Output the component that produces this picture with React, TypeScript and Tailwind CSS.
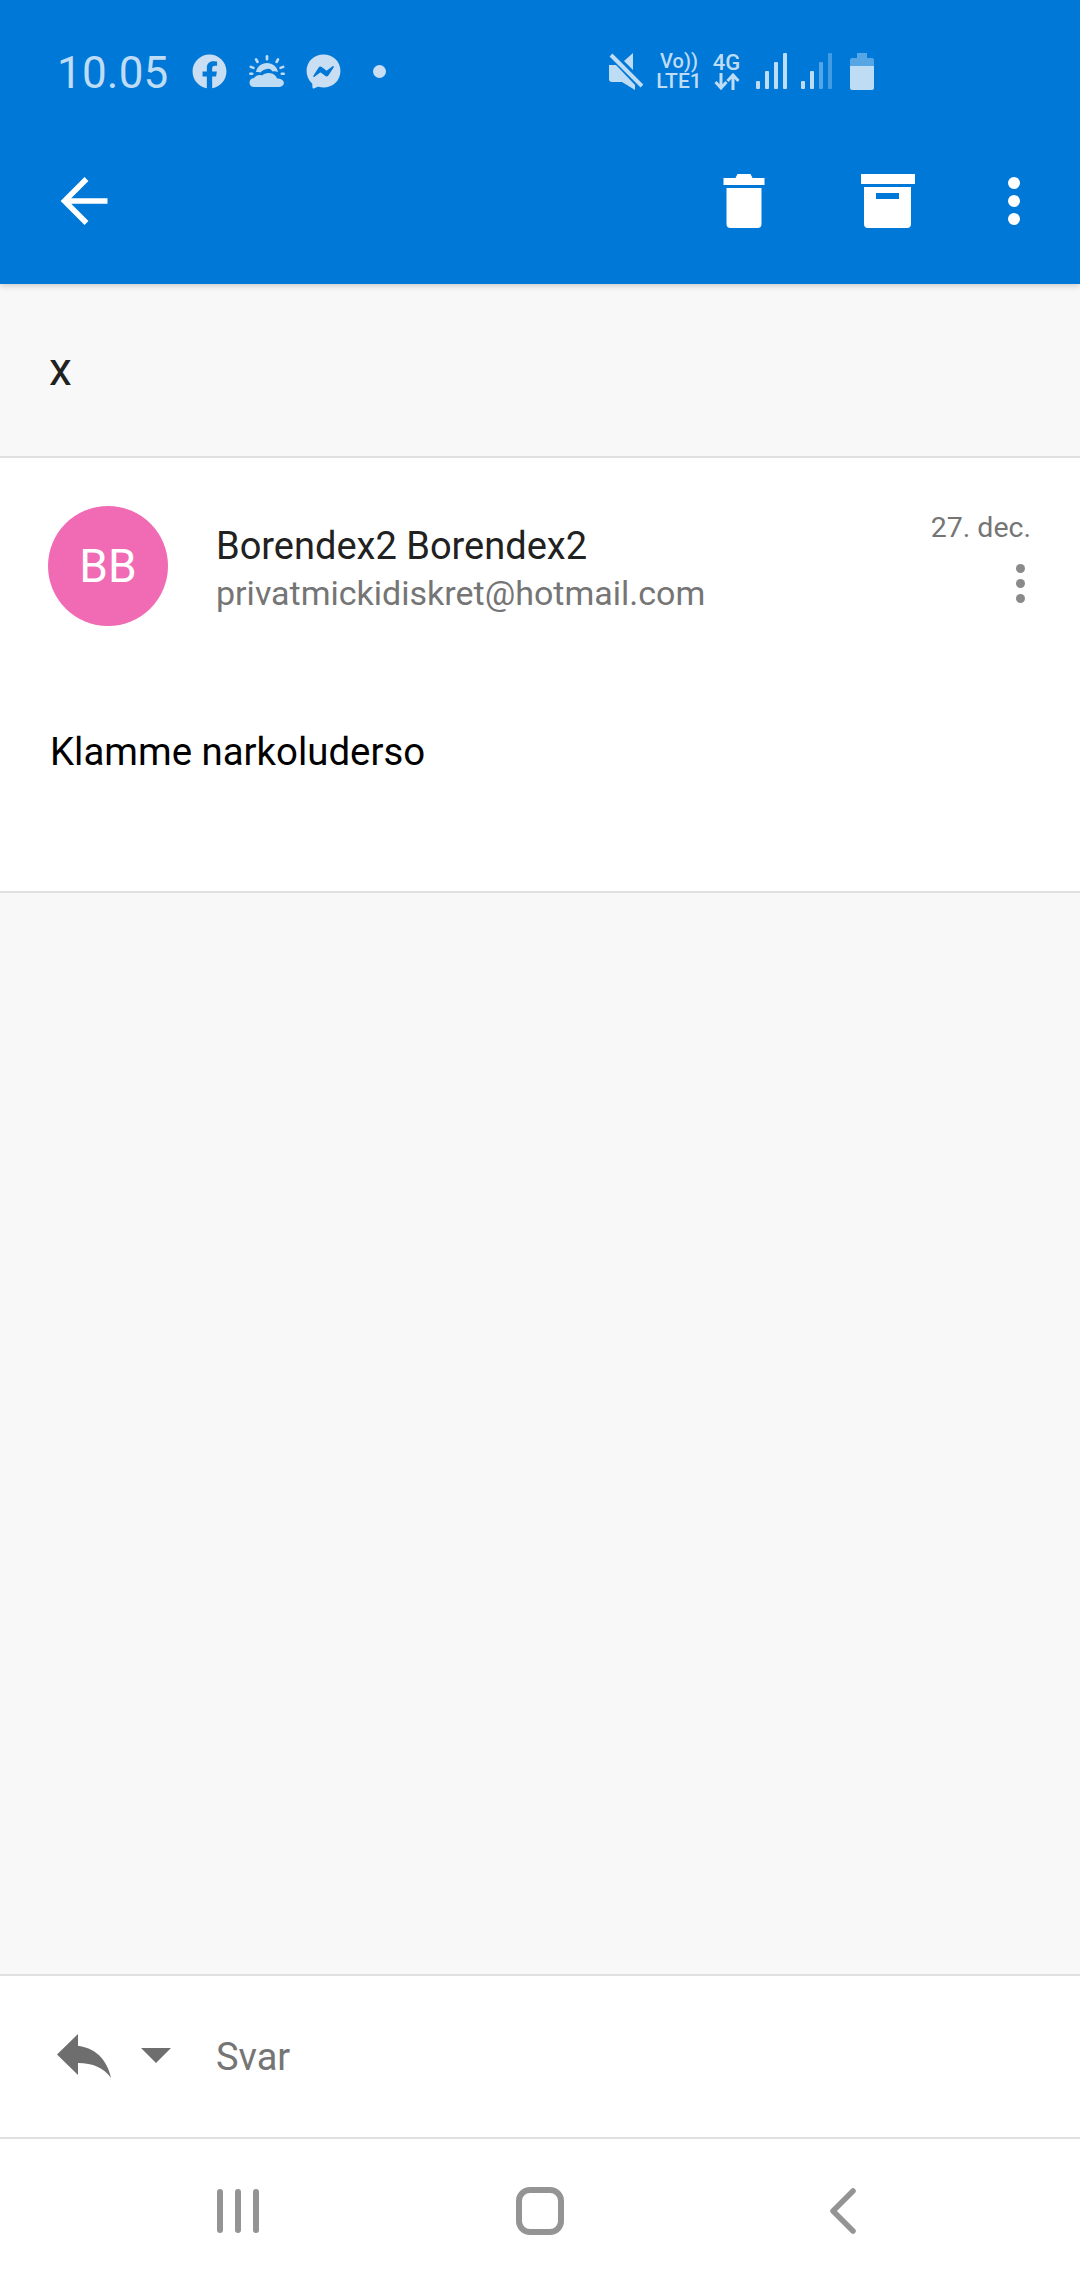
import { FaFacebook, FaFacebookMessenger } from "react-icons/fa";

function WeatherIcon() {
  return (
    <svg width="36" height="32" viewBox="0 0 36 32" fill="currentColor" className="ml-[22px]">
      <path d="M7 17c1-5.500 5.500-9 11-9s10 3.500 11 9c-2-1-4-1-5.500-.5C22 14 20 13.500 18 14c-3 .5-5 1.500-6.500 3.500C10 17 8.500 17 7 17z" />
      <path d="M5 32c-6 0-6-8.500 0-9 2-2.500 5-3.500 8-2.500 2-2 6-3.500 10-2 3 1 4.500 3 5 5 9 0 9 8.500 1 8.500H5z" />
      <rect x="16.700" y="0" width="2.600" height="5.500" rx="1.300" />
      <rect x="6.500" y="3" width="2.600" height="5.500" rx="1.300" transform="rotate(-30 7.800 5.700)" />
      <rect x="27" y="3" width="2.600" height="5.500" rx="1.300" transform="rotate(30 28.300 5.700)" />
      <rect x="0.500" y="11" width="5.500" height="2.600" rx="1.300" transform="rotate(20 3 12)" />
      <rect x="30" y="11" width="5.500" height="2.600" rx="1.300" transform="rotate(-20 33 12)" />
      <rect x="0" y="17.500" width="4.500" height="2.600" rx="1.300" />
      <rect x="31.500" y="17.500" width="4.500" height="2.600" rx="1.300" />
    </svg>
  );
}

function MuteIcon() {
  return (
    <svg width="34" height="38" viewBox="0 0 34 38" fill="currentColor">
      <path d="M0 13h7l19 20v5l-13-8H3c-2 0-3-1-3-3V13z" />
      <path d="M24 1v17L15 9l9-8z" />
      <path d="M2 3 33 34" stroke="currentColor" strokeWidth="4" fill="none" />
    </svg>
  );
}

function SignalIcon({ faded = false }: { faded?: boolean }) {
  return (
    <svg width="31" height="36" viewBox="0 0 31 36" fill="currentColor">
      <rect x="0" y="28" width="4" height="8" rx="1" />
      <rect x="9" y="18" width="4" height="18" rx="1" />
      <rect x="18" y="9" width="4" height="27" rx="1" opacity={faded ? 0.45 : 1} />
      <rect x="27" y="0" width="4" height="36" rx="1" opacity={faded ? 0.35 : 1} />
    </svg>
  );
}

function BatteryIcon() {
  return (
    <svg width="24" height="37" viewBox="0 0 24 37" fill="currentColor">
      <path d="M7 0h10v5h5a2 2 0 0 1 2 2v6H0V7a2 2 0 0 1 2-2h5V0z" opacity="0.45" />
      <path d="M0 13h24v22a2 2 0 0 1-2 2H2a2 2 0 0 1-2-2V13z" />
    </svg>
  );
}

function StatusBar() {
  return (
    <div className="flex h-[142px] items-center pl-[57px] text-[#bfdcf5]">
      <span className="mt-[3px] w-[135px] text-[44px] leading-none tracking-[0.2px]">10.05</span>
      <FaFacebook size={35} className="text-[#c9def3]" />
      <WeatherIcon />
      <FaFacebookMessenger size={35} className="ml-[21px] text-[#c9def3]" />
      <span className="ml-[32px] h-[13px] w-[13px] rounded-full bg-[#c9def3]" />

      <div className="ml-[223px] flex items-center">
        <MuteIcon />
        <div className="ml-[14px] flex w-[44px] flex-col items-center text-[21px] leading-[20px] font-medium">
          <span className="text-[20px]">Vo))</span>
          <span>LTE1</span>
        </div>
        <div className="ml-[12px] flex w-[27px] flex-col items-center">
          <span className="text-[22px] leading-[20px] font-medium">4G</span>
          <svg width="26" height="17" viewBox="0 0 26 17" fill="none" stroke="currentColor" strokeWidth="3">
            <path d="M7 0v14M1.500 9 7 15l5.500-6M19 17V3M13.500 8 19 2l5.500 6" />
          </svg>
        </div>
        <div className="ml-[16px]">
          <SignalIcon />
        </div>
        <div className="ml-[14px]">
          <SignalIcon faded />
        </div>
        <div className="ml-[18px]">
          <BatteryIcon />
        </div>
      </div>
    </div>
  );
}

function Toolbar() {
  return (
    <div className="flex h-[118px] items-center pl-[60px] text-white">
      <svg width="48" height="48" viewBox="0 0 47 48" fill="none" stroke="currentColor" strokeWidth="5.500">
        <path d="M47 24H4M26 2 4 24l22 22" />
      </svg>
      <svg width="42" height="54" viewBox="0 0 41 54" fill="currentColor" className="ml-[615px]">
        <path d="M0 4h12l2-4h13l2 4h12v7H0V4z" />
        <path d="M3 14h35v36a4 4 0 0 1-4 4H7a4 4 0 0 1-4-4V14z" />
      </svg>
      <svg width="54" height="54" viewBox="0 0 54 54" fill="currentColor" className="ml-[96px]">
        <rect x="0" y="0" width="54" height="10" />
        <path fillRule="evenodd" d="M3 13h47v37a4 4 0 0 1-4 4H7a4 4 0 0 1-4-4V13zm12 6v6h23v-6H15z" />
      </svg>
      <div className="ml-[93px] flex flex-col gap-[6px]">
        <span className="h-[12px] w-[12px] rounded-full bg-white" />
        <span className="h-[12px] w-[12px] rounded-full bg-white" />
        <span className="h-[12px] w-[12px] rounded-full bg-white" />
      </div>
    </div>
  );
}

function MessageCard() {
  return (
    <div className="h-[435px] border-b-2 border-[#e0e0e0] bg-white">
      <div className="flex pt-[48px] pl-[48px]">
        <div className="flex h-[120px] w-[120px] shrink-0 items-center justify-center rounded-full bg-[#f06bb4] text-[46px] text-white">
          BB
        </div>
        <div className="ml-[48px] flex flex-col pt-[16px]">
          <span className="text-[38px] leading-[48px] text-[#212121]">Borendex2 Borendex2</span>
          <span className="text-[34px] leading-[46px] text-[#757575]">privatmickidiskret@hotmail.com</span>
        </div>
        <div className="ml-auto flex flex-col items-end pt-[3px] pr-[49px]">
          <span className="text-[28.5px] leading-[38px] text-[#757575]">27. dec.</span>
          <div className="mt-[17px] mr-[6px] flex flex-col gap-[6px]">
            <span className="h-[9px] w-[9px] rounded-full bg-[#8a8a8a]" />
            <span className="h-[9px] w-[9px] rounded-full bg-[#8a8a8a]" />
            <span className="h-[9px] w-[9px] rounded-full bg-[#8a8a8a]" />
          </div>
        </div>
      </div>
      <p className="mt-[102px] pl-[50px] text-[38.4px] leading-[48px] text-black">Klamme narkoluderso</p>
    </div>
  );
}

function ReplyBar() {
  return (
    <div className="flex h-[165px] items-center border-y-2 border-[#e0e0e0] bg-white pl-[57px]">
      <svg width="54" height="44" viewBox="3 5 18 15" preserveAspectRatio="none" fill="#6e6e6e" className="mt-[-2px]">
        <path d="M10 9V5l-7 7 7 7v-4.100c5 0 8.500 1.600 11 5.100-1-5-4-10-11-11z" />
      </svg>
      <span className="mt-[-2px] ml-[30px] h-0 w-0 border-x-[15px] border-t-[15px] border-x-transparent border-t-[#6e6e6e]" />
      <span className="mt-[2px] ml-[45px] text-[38px] text-[#757575]">Svar</span>
    </div>
  );
}

function NavBar() {
  return (
    <div className="flex h-[141px] items-center bg-white pt-[3px]">
      <div className="ml-[217px] flex gap-[12px]">
        <span className="h-[44px] w-[6px] rounded-full bg-[#949494]" />
        <span className="h-[44px] w-[6px] rounded-full bg-[#949494]" />
        <span className="h-[44px] w-[6px] rounded-full bg-[#949494]" />
      </div>
      <span className="ml-[257px] h-[48px] w-[48px] rounded-[14px] border-[6px] border-[#949494]" />
      <svg width="27" height="46" viewBox="0 0 27 46" fill="none" stroke="#949494" strokeWidth="5.500" strokeLinecap="round" strokeLinejoin="round" className="ml-[265px]">
        <path d="M24 3 4 23l20 20" />
      </svg>
    </div>
  );
}

export default function App() {
  return (
    <div className="flex h-[2280px] w-[1080px] flex-col bg-[#f8f8f8] font-['Roboto',sans-serif]">
      <header className="relative h-[284px] bg-[#0078d7] shadow-[0_2px_6px_rgba(0,0,0,0.18)]">
        <StatusBar />
        <Toolbar />
      </header>
      <div className="flex h-[174px] items-center border-b-2 border-[#e0e0e0] pl-[49px] text-[46px] text-[#212121]">
        <span className="mt-[-2px]">x</span>
      </div>
      <MessageCard />
      <div className="flex-1" />
      <ReplyBar />
      <NavBar />
    </div>
  );
}
